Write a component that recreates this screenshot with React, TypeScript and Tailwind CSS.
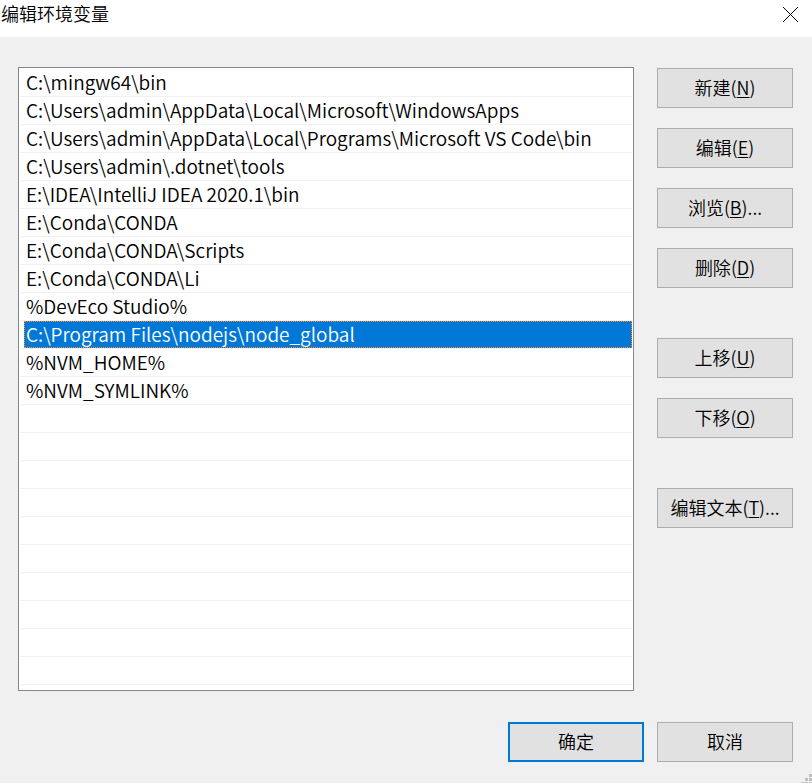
import { useState } from "react";

const paths = [
  "C:\\mingw64\\bin",
  "C:\\Users\\admin\\AppData\\Local\\Microsoft\\WindowsApps",
  "C:\\Users\\admin\\AppData\\Local\\Programs\\Microsoft VS Code\\bin",
  "C:\\Users\\admin\\.dotnet\\tools",
  "E:\\IDEA\\IntelliJ IDEA 2020.1\\bin",
  "E:\\Conda\\CONDA",
  "E:\\Conda\\CONDA\\Scripts",
  "E:\\Conda\\CONDA\\Li",
  "%DevEco Studio%",
  "C:\\Program Files\\nodejs\\node_global",
  "%NVM_HOME%",
  "%NVM_SYMLINK%",
];

const ROW_COUNT = 22;

type Action = { label: string; accessKey: string; more?: boolean };

const actionGroups: Action[][] = [
  [
    { label: "新建", accessKey: "N" },
    { label: "编辑", accessKey: "E" },
    { label: "浏览", accessKey: "B", more: true },
    { label: "删除", accessKey: "D" },
  ],
  [
    { label: "上移", accessKey: "U" },
    { label: "下移", accessKey: "O" },
  ],
  [{ label: "编辑文本", accessKey: "T", more: true }],
];

function ActionButton({ label, accessKey, more }: Action) {
  return (
    <button
      type="button"
      accessKey={accessKey.toLowerCase()}
      className="h-10 w-full border border-[#adadad] bg-[#e1e1e1] pb-0.5 whitespace-nowrap"
    >
      {label}(<span className="underline decoration-1 underline-offset-2">{accessKey}</span>){more ? "..." : ""}
    </button>
  );
}

function PathRow({ text, selected, onSelect }: { text: string; selected: boolean; onSelect: () => void }) {
  return (
    <li
      role="option"
      aria-selected={selected}
      onClick={onSelect}
      className="h-7 border-b border-[#f0f0f0] pl-1"
    >
      <div
        className={
          selected
            ? "h-full border border-dotted border-[#ff8728] bg-[#0078d7] pl-px leading-6 whitespace-nowrap text-white"
            : "h-full border border-transparent pl-px leading-6 whitespace-nowrap"
        }
      >
        {text}
      </div>
    </li>
  );
}

export default function App() {
  const [selected, setSelected] = useState(9);

  return (
    <div
      role="dialog"
      aria-labelledby="dialog-title"
      className="relative flex min-h-screen flex-col bg-[#f0f0f0] font-['Noto_Sans_CJK_SC',sans-serif] text-[18px] leading-6 font-[350] text-black"
    >
      <header className="flex h-[37px] items-start justify-between bg-white pt-px pr-[14px] pl-px">
        <h1 id="dialog-title" className="font-[350]">编辑环境变量</h1>
        <button type="button" aria-label="关闭" className="mt-[6px]">
          <svg width="15" height="15" viewBox="0 0 15 15" fill="none" stroke="#000" strokeWidth="1">
            <path d="M0 0L15 15M15 0L0 15" />
          </svg>
        </button>
      </header>

      <main className="flex flex-1 flex-col pt-[30px] pr-[19px] pb-[21px] pl-[18px]">
        <div className="flex gap-[23px]">
          <ul
            role="listbox"
            aria-labelledby="dialog-title"
            className="min-w-0 flex-1 overflow-hidden border border-[#828790] bg-white px-px pt-px pb-[5px] text-[19px]"
          >
            {paths.map((path, index) => (
              <PathRow key={path} text={path} selected={index === selected} onSelect={() => setSelected(index)} />
            ))}
            {Array.from({ length: ROW_COUNT - paths.length }, (_, index) => (
              <li key={index} role="presentation" className="h-7 border-b border-[#f0f0f0]" />
            ))}
          </ul>

          <div className="flex w-[136px] flex-col gap-[50px] pt-px">
            {actionGroups.map((group, index) => (
              <div key={index} className="flex flex-col gap-5">
                {group.map((action) => (
                  <ActionButton key={action.accessKey} {...action} />
                ))}
              </div>
            ))}
          </div>
        </div>

        <footer className="mt-[31px] flex justify-end gap-[13px]">
          <button type="button" className="h-10 w-[136px] border-2 border-[#0078d7] bg-[#e1e1e1] pb-0.5">确定</button>
          <button type="button" className="h-10 w-[136px] border border-[#adadad] bg-[#e1e1e1] pb-0.5">取消</button>
        </footer>
      </main>

      <svg className="absolute right-0 bottom-0" width="11" height="9" viewBox="0 0 11 9" fill="#bfbfbf" aria-hidden="true">
        <path d="M8 0h3v3h-3zM4 4h3v3h-3zM8 4h3v3h-3zM0 8h3v1h-3zM4 8h3v1h-3zM8 8h3v1h-3z" />
      </svg>
    </div>
  );
}
